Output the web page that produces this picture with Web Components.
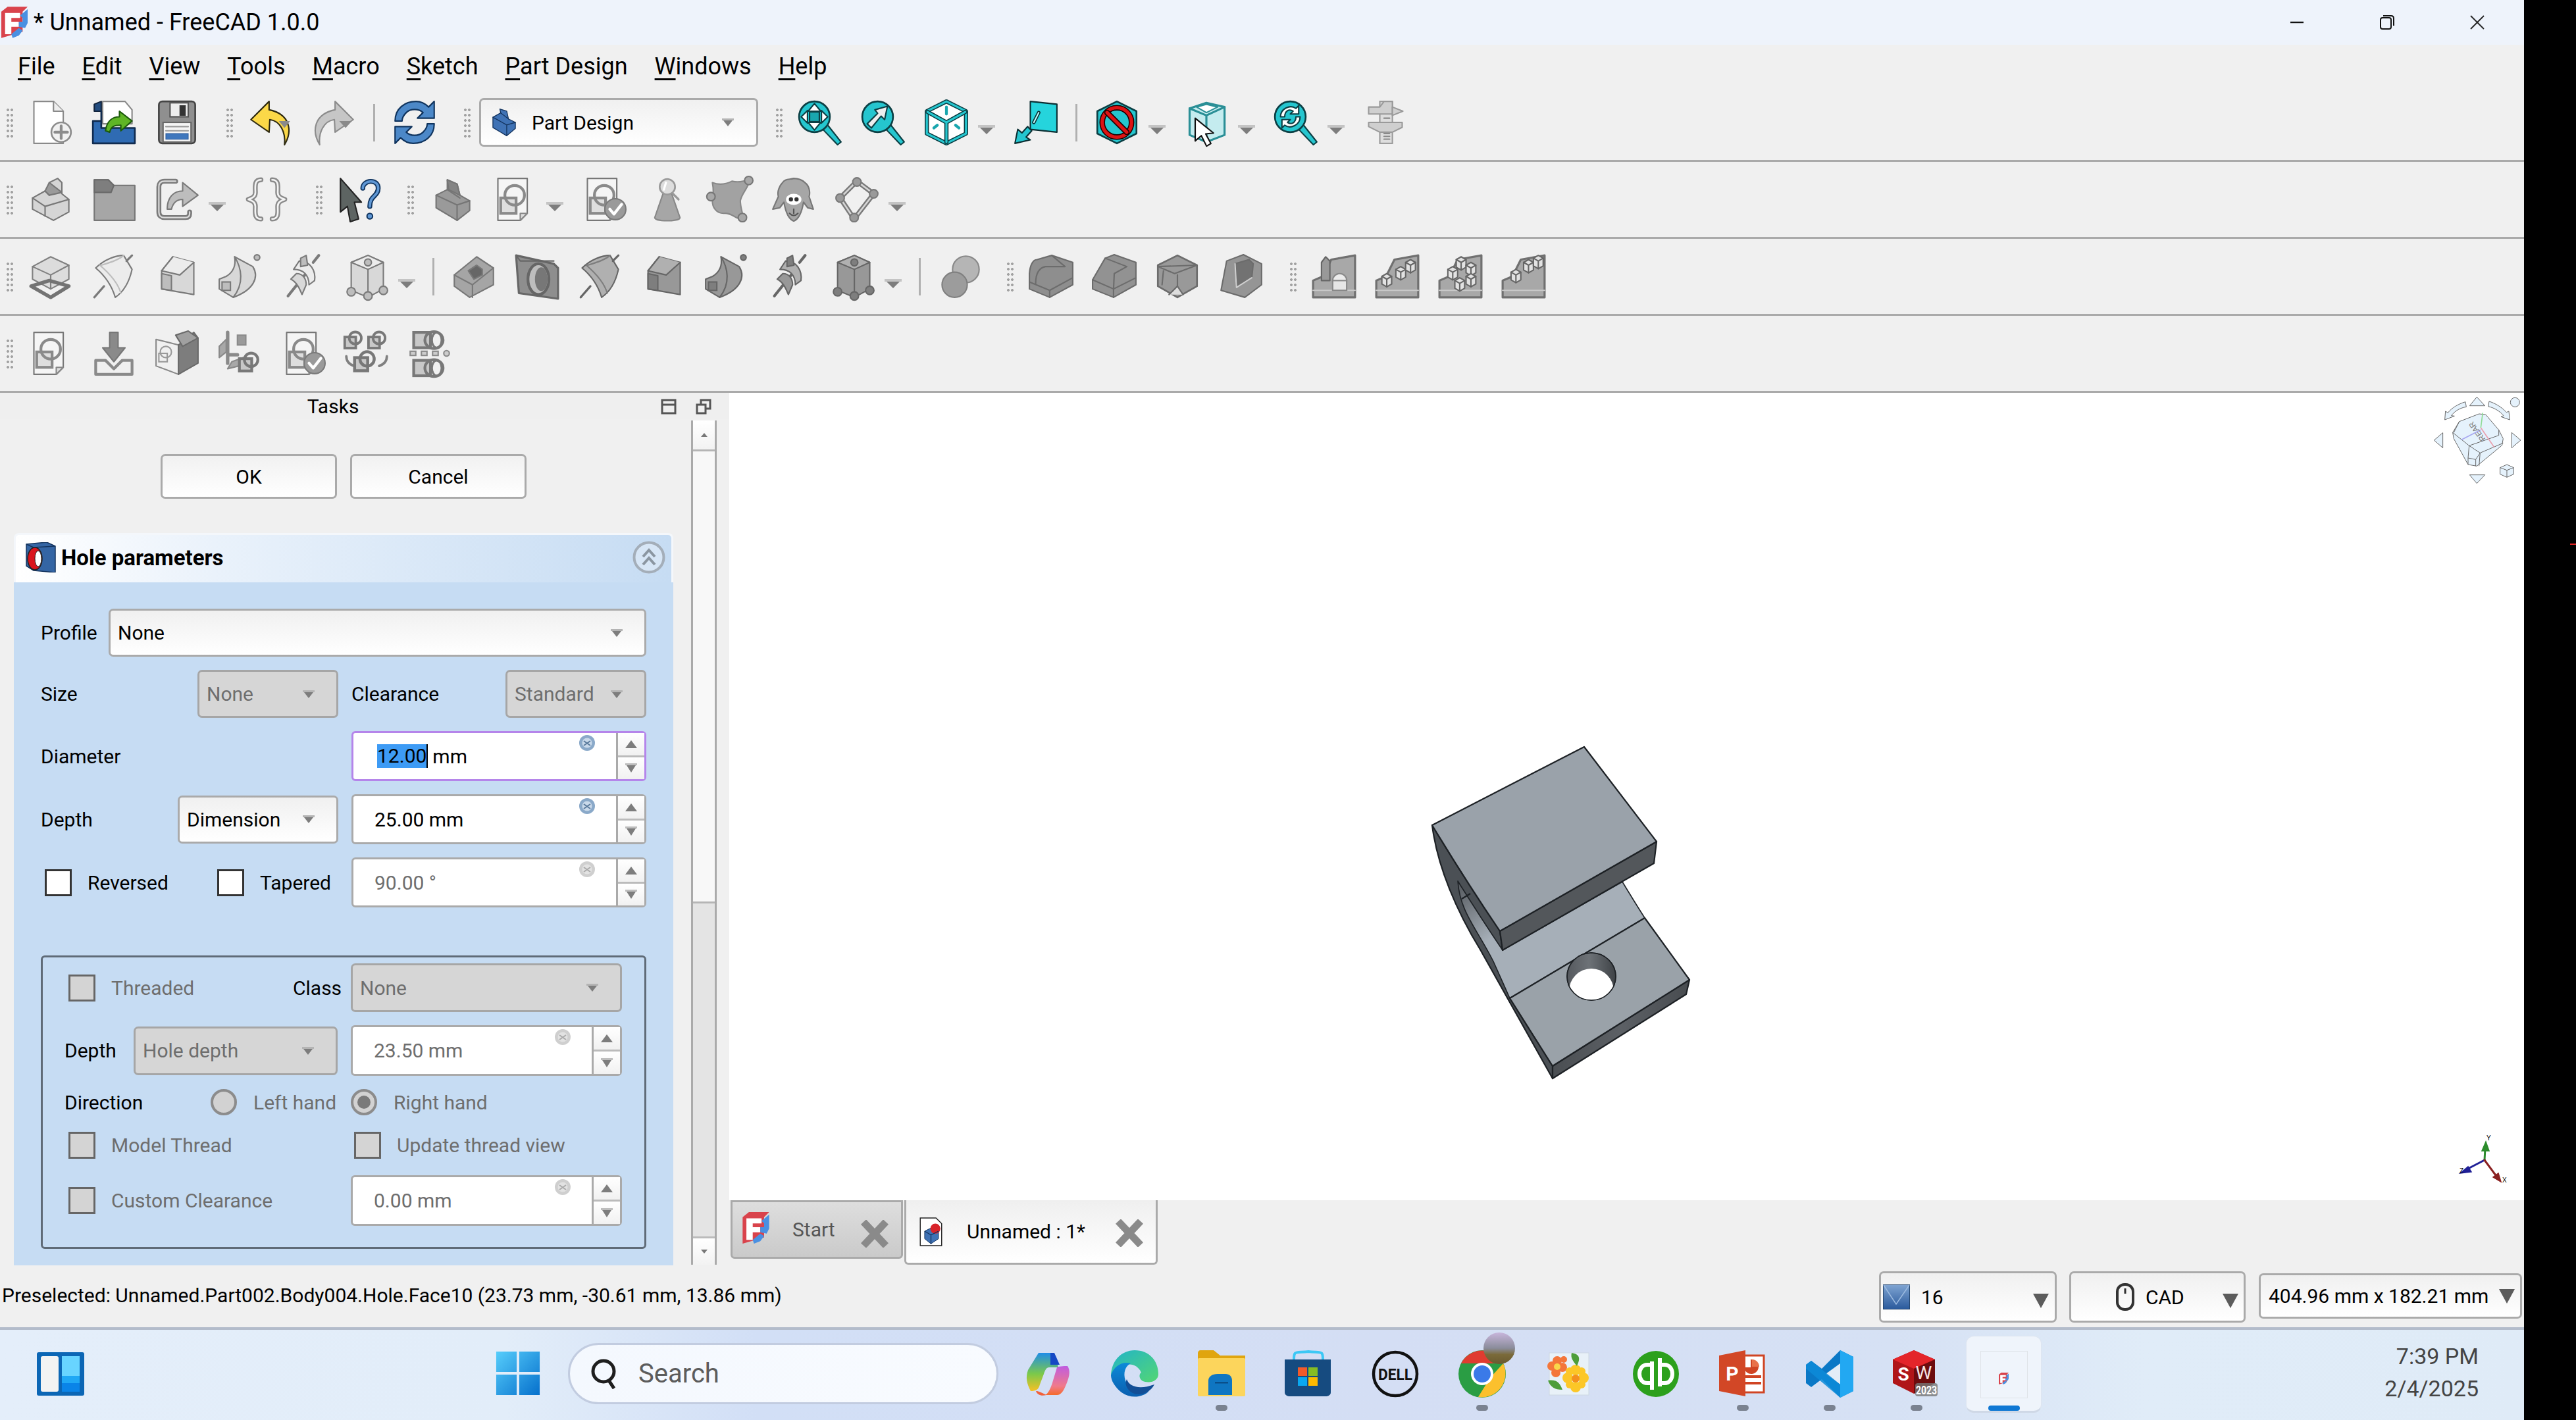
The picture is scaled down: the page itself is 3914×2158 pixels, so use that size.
<!DOCTYPE html>
<html lang="en">
<head>
<meta charset="utf-8">
<title>FreeCAD</title>
<style>
  html, body { margin: 0; padding: 0; background: #000; }
  body { width: 3914px; height: 2158px; overflow: hidden; font-family: Roboto, "Liberation Sans", sans-serif; font-size: 30px; color: #000; }
  u { text-underline-offset: 6px; text-decoration-thickness: 3px; }
</style>
</head>
<body>
<fc-screen>
  <fc-titlebar text="* Unnamed - FreeCAD 1.0.0"></fc-titlebar>
  <fc-menubar>
    <span><u>F</u>ile</span><span><u>E</u>dit</span><span><u>V</u>iew</span><span><u>T</u>ools</span><span><u>M</u>acro</span><span><u>S</u>ketch</span><span><u>P</u>art Design</span><span><u>W</u>indows</span><span><u>H</u>elp</span>
  </fc-menubar>
  <fc-tbrow items="| new open save | undo redo : refresh | @ | fitall fitsel cube v plane : style v selbox v zoomsync v measure">
    <fc-combo style="width:424px;height:74px;padding-left:14px" arrow="34"><fc-icon name="pdlogo" size="42" box="42"></fc-icon><span style="margin-left:21px">Part Design</span></fc-combo>
  </fc-tbrow>
  <fc-tbrow items="| parts folder link v braces | whatsthis |14 body sketch v validate cone blob sheep diamond v"></fc-tbrow>
  <fc-tbrow items="| pad revolve loft pipe helix box v : pocket hole groove subloft subpipe subhelix subbox v : bool |13 fillet chamfer draft thick |17 mirror linear polar multi"></fc-tbrow>
  <fc-tbrow items="| sketch import attach planes validate chains1 chains2"></fc-tbrow>

  <fc-main>
    <fc-dock title-text="Tasks">
      <fc-actions><fc-button>OK</fc-button><fc-button>Cancel</fc-button></fc-actions>
      <fc-taskbox heading="Hole parameters">
        <fc-row cols="103px 817px"><span>Profile</span><fc-combo>None</fc-combo></fc-row>
        <fc-row cols="238px 214px 254px 214px"><span>Size</span><fc-combo disabled>None</fc-combo><span style="padding-left:20px">Clearance</span><fc-combo disabled>Standard</fc-combo></fc-row>
        <fc-row cols="472px 448px"><span>Diameter</span><fc-spin value="12.00" unit="mm" focused></fc-spin></fc-row>
        <fc-row cols="208px 244px 468px"><span>Depth</span><fc-combo>Dimension</fc-combo><fc-spin style="margin-left:20px" value="25.00" unit="mm"></fc-spin></fc-row>
        <fc-row cols="268px 204px 448px"><fc-check style="margin-left:6px">Reversed</fc-check><fc-check>Tapered</fc-check><fc-spin value="90.00" unit="°" disabled></fc-spin></fc-row>
        <fc-group>
          <fc-row cols="347px 88px 412px"><fc-check style="margin-left:6px" disabled>Threaded</fc-check><span>Class</span><fc-combo disabled style="height:74px">None</fc-combo></fc-row>
          <fc-row cols="105px 330px 412px"><span>Depth</span><fc-combo disabled style="height:74px;margin-right:20px">Hole depth</fc-combo><fc-spin style="height:77px" value="23.50" unit="mm" dim></fc-spin></fc-row>
          <fc-row cols="222px 213px 412px"><span>Direction</span><fc-radio>Left hand</fc-radio><fc-radio checked>Right hand</fc-radio></fc-row>
          <fc-row cols="440px 407px" style="margin-top:5px"><fc-check style="margin-left:6px" disabled>Model Thread</fc-check><fc-check disabled>Update thread view</fc-check></fc-row>
          <fc-row cols="435px 412px" style="margin-top:5px"><fc-check style="margin-left:6px" disabled>Custom Clearance</fc-check><fc-spin style="height:77px" value="0.00" unit="mm" dim></fc-spin></fc-row>
        </fc-group>
      </fc-taskbox>
    </fc-dock>
    <fc-viewport>
      <fc-view3d></fc-view3d>
      <fc-tabs>
        <fc-tab icon="logo">Start</fc-tab>
        <fc-tab icon="doc" active>Unnamed : 1*</fc-tab>
      </fc-tabs>
    </fc-viewport>
  </fc-main>

  <fc-statusbar text="Preselected: Unnamed.Part002.Body004.Hole.Face10 (23.73 mm, -30.61 mm, 13.86 mm)">
    <fc-combo big low style="width:270px;height:78px;padding-left:3px" arrow="9"><svg width="41" height="38" viewBox="0 0 41 38"><defs><linearGradient id="sw" x1="0" y1="0" x2="0" y2="1"><stop offset="0" stop-color="#7fa4d2"/><stop offset="1" stop-color="#2a5a9c"/></linearGradient></defs><rect x=".5" y=".5" width="40" height="37" fill="url(#sw)" stroke="#24466f"/><path d="M1 1L20 30 40 1" fill="none" stroke="#9dbbe0" stroke-width="1.5"/></svg><span style="margin-left:17px">16</span></fc-combo>
    <fc-combo big low style="width:268px;height:78px;margin-left:19px;padding-left:67px" arrow="8"><svg width="30" height="42" viewBox="0 0 30 42"><rect x="3" y="2" width="24" height="38" rx="11" fill="none" stroke="#333" stroke-width="4"/><path d="M15 8v8" stroke="#333" stroke-width="3"/></svg><span style="margin-left:16px">CAD</span></fc-combo>
    <fc-combo big style="width:400px;height:69px;margin-left:20px;margin-top:3px;padding-left:12px" arrow="8">404.96 mm x 182.21 mm</fc-combo>
  </fc-statusbar>

  <fc-taskbar>
    <fc-taskicon name="widgets" plain style="margin-left:56px"></fc-taskicon>
    <fc-taskicon name="start" plain style="margin-left:624px;width:70px"></fc-taskicon>
    <fc-search>Search</fc-search>
    <fc-taskicon name="copilot"></fc-taskicon>
    <fc-taskicon name="edge"></fc-taskicon>
    <fc-taskicon name="files" dot></fc-taskicon>
    <fc-taskicon name="store"></fc-taskicon>
    <fc-taskicon name="dell"></fc-taskicon>
    <fc-taskicon name="chrome" dot></fc-taskicon>
    <fc-taskicon name="paint"></fc-taskicon>
    <fc-taskicon name="qb"></fc-taskicon>
    <fc-taskicon name="ppt" dot></fc-taskicon>
    <fc-taskicon name="vscode" dot></fc-taskicon>
    <fc-taskicon name="sw" dot></fc-taskicon>
    <fc-taskicon name="freecad" active></fc-taskicon>
    <fc-clock time="7:39 PM" date="2/4/2025"></fc-clock>
  </fc-taskbar>
</fc-screen>

<script>
const open_ = (el, html) => { el.attachShadow({ mode: 'open' }).innerHTML = html; };

// svg helpers for the toolbar icons, 64 unit box
const p = (d, f = 'none', s = '#6b6b6b', w = 2) => `<path d="${d}" fill="${f}" stroke="${s}" stroke-width="${w}" stroke-linejoin="round" stroke-linecap="round"/>`;
const c = (x, y, r, f = 'none', s = '#6b6b6b', w = 2) => `<circle cx="${x}" cy="${y}" r="${r}" fill="${f}" stroke="${s}" stroke-width="${w}"/>`;
const r = (x, y, wd, h, f = 'none', s = '#6b6b6b', w = 2) => `<rect x="${x}" y="${y}" width="${wd}" height="${h}" fill="${f}" stroke="${s}" stroke-width="${w}"/>`;

const LT = ['#ececec', '#d8d8d8', '#bdbdbd', '#7a7a7a'];
const DK = ['#b0b0b0', '#989898', '#7e7e7e', '#666'];
const TEAL = '#25c6cf', INK = '#0c3f44';

const lens = inner => p('M36 42l7-6 19 24-5 4z', TEAL, INK, 2) + c(24, 24, 22, TEAL, INK, 2.5) + inner;
const page = () => p('M8 2H50V52L40 62H8Z', '#f5f5f5', '#777') + p('M50 52H40V62Z', '#ddd', '#888') + r(12, 30, 22, 22, '#dedede', '#8a8a8a', 4) + c(32, 26, 14, 'none', '#8a8a8a', 4);
const tick = () => c(48, 46, 15, '#9a9a9a', '#7a7a7a', 2) + p('M40 46l6 7 11-14', 'none', '#fff', 4);
const link = (x, y, s) => `<g transform="translate(${x} ${y}) scale(${s})">` + r(1, 12, 22, 22, '#c8c8c8', '#787878', 5) + c(22, 14, 12, 'none', '#787878', 5) + `</g>`;
const wide = (x, y) => `<g transform="translate(${x} ${y})">` + r(1, 2, 24, 22, '#c8c8c8', '#787878', 4) + `<ellipse cx="30" cy="13" rx="13" ry="12" fill="none" stroke="#787878" stroke-width="4"/><ellipse cx="34" cy="13" rx="7" ry="11" fill="none" stroke="#787878" stroke-width="3"/></g>`;
const sel = 'M0 0l0 26 7-6 6 12 5-3-6-11 9-1z';

const revolveI = t => p('M6 20C18 8 34 2 46 2L58 22C54 40 46 54 34 62 28 42 18 30 6 20Z', t[0], t[3]) + p('M50 10l8-8M4 62l14-16', 'none', t[3], 3) + p('M12 16C26 28 38 42 42 56M46 2C40 8 28 12 14 16', 'none', t[2]);
const loftI = t => p('M26 4L56 12V58L10 50V24Z', t[1], t[3]) + p('M26 4L10 24 36 30 56 12', t[0], t[3]) + p('M10 28L24 31V52L10 50Z', t[2], t[3]);
const pipeI = t => p('M24 4L50 18C60 34 50 52 22 62L2 50V36L12 32C22 26 26 16 24 4Z', t[1], t[3]) + c(56, 5, 4, t[2], t[3]) + r(6, 40, 12, 12, t[2], t[3]) + p('M24 4C34 20 38 42 22 62', 'none', t[3]);
const helixI = t => p('M10 60L34 30M46 12l8-10', 'none', t[3], 4) + p('M26 10C42 10 50 24 48 38L40 44C40 30 32 22 18 22Z', t[0], t[3]) + p('M22 28C32 28 36 36 36 44L30 58C26 48 22 40 14 36Z', t[1], t[3]) + p('M28 6l8-4 2 14-10 2z', t[2], t[3]);
const boxI = t => p('M10 12L34 2 56 12V50L34 62 10 52Z', t[1], t[3]) + p('M10 12L34 22 56 12 34 2Z', t[0], t[3]) + p('M34 22V62', 'none', t[3]) + c(10, 54, 6, t[2], t[3]) + c(34, 60, 6, t[2], t[3]) + c(56, 52, 6, t[2], t[3]) + c(34, 12, 5, t[2], t[3]);
const plate = inner => p('M2 38L16 32 28 8 62 2V62H2Z', '#a8a8a8', '#707070', 3) + p('M2 52L62 52', 'none', '#c8c8c8', 2) + inner;
const minicube = (x, y) => p(`M${x} ${y + 4}l7-4 7 4v11l-7 4-7-4z`, '#e2e2e2', '#666') + p(`M${x} ${y + 4}l7 4 7-4M${x + 7} ${y + 8}v11`, 'none', '#666');

const ICONS = {
  new: p('M8 2H36L50 16V62H8Z', '#fff', '#8a8a8a') + p('M36 2V16H50', '#eee', '#8a8a8a') + c(47, 46, 14, '#f1f1f1', '#8c8c8c', 2.5) + p('M47 37V55M38 46H56', 'none', '#8c8c8c', 4),
  open: p('M4 6L14 2V16H4Z', '#234d80', '#12243c') + p('M16 2H48L58 14V34H16Z', '#fff', '#888') + p('M2 30L14 30 14 16 14 40H62V62H2Z', '#2f6bb3', '#102b4f', 2.5) + p('M20 44C22 30 30 24 40 24V16L58 30 42 44V36C32 36 28 38 26 46Z', '#5fb526', '#1d5a0d', 2),
  save: `<rect x="6" y="2" width="52" height="60" rx="5" fill="#8f8f8f" stroke="#454545" stroke-width="2.5"/>` + r(22, 4, 26, 20, '#eee', '#555') + r(36, 8, 8, 14, '#333', '#333', 1) + r(12, 32, 40, 28, '#f4f4f4', '#666') + p('M16 38H48M16 44H48', 'none', '#9a9a9a', 2) + r(16, 48, 32, 8, '#3f77bd', '#2a5a9c', 1),
  undo: p('M30 2L4 28 30 46 31 28C46 30 54 46 52 64 64 44 60 20 30 14Z', '#fbd848', '#2e2a10', 2) + p('M44 30H60L52 40Z', '#8a8a8a', 'none', 0),
  redo: p('M34 2L60 28 34 46 33 28C18 30 10 46 12 64 0 44 4 20 34 14Z', '#c6c6c6', '#8c8c8c', 2) + p('M40 30H58L49 40Z', '#8a8a8a', 'none', 0),
  refresh: p('M4 30C4 12 18 2 34 2 42 2 48 6 52 10L60 2V26H36L44 18C38 12 26 12 20 18 16 22 14 26 14 30Z', '#4c88c8', '#10345e', 2) + p('M60 34C60 52 46 62 30 62 22 62 16 58 12 54L4 62V38H28L20 46C26 52 38 52 44 46 48 42 50 38 50 34Z', '#4c88c8', '#10345e', 2),
  pdlogo: p('M6 20L24 10 22 1 38 6 42 24 58 32V46L38 63 6 44Z', '#3f72b5', '#14345f') + p('M6 20L38 38V63M38 38L58 32M24 10L42 24', 'none', '#14345f'),
  fitall: lens(p('M24 5L33 16H15ZM24 43L15 32H33ZM5 24L14 15V33ZM43 24L34 33V15Z', '#fff', INK) + r(17, 17, 14, 14, '#19a6ae', INK)),
  fitsel: lens(p('M38 9L34 28 29 23 15 40 9 34 24 19 20 14Z', '#eee', INK)),
  cube: p('M32 2L60 16V48L32 62 4 48V16Z', '#fff', INK, 6) + p('M32 2L60 16V48L32 62 4 48V16Z', 'none', TEAL, 3) + p('M5 17L32 32 59 17M32 32V60', 'none', INK, 6) + p('M5 17L32 32 59 17M32 32V60', 'none', TEAL, 3) + p('M32 10V20M14 40l5-4M50 40l-5-4', 'none', '#19a6ae', 4),
  plane: p('M24 2L62 6V46L24 42Z', '#25d4dc', '#0b2f33') + p('M36 18L29 32', 'none', '#0b2f33', 5) + p('M36 18L29 32', 'none', '#bff', 2) + p('M2 62L6 42 12 47 20 38 26 44 18 53 24 57Z', TEAL, '#0b2f33'),
  style: p('M32 2L60 16V48L32 62 4 48V16Z', TEAL, INK, 2.5) + c(32, 32, 21, 'none', '#1e0000', 8) + c(32, 32, 21, 'none', '#dc1414', 5) + p('M18 18L46 46', 'none', '#1e0000', 8) + p('M18 18L46 46', 'none', '#dc1414', 5),
  selbox: p('M8 12L32 4 58 10V50L32 60 8 50Z', '#c4ecef', '#2a8f96', 3) + p('M8 12L32 22 58 10M32 22V60', 'none', '#2a8f96', 3) + p('M18 10L32 6 48 10 32 18Z', '#fff', '#2a8f96', 2) + `<g transform="translate(16 26) scale(1.25)">${p(sel, '#fff', '#111', 1.6)}</g>`,
  zoomsync: lens(p('M10 24C10 12 24 6 32 12L36 8V20H24L28 16C22 12 16 16 16 24Z', '#fff', INK) + p('M38 24C38 36 24 42 16 36L12 40V28H24L20 32C26 36 32 32 32 24Z', '#fff', INK)),
  measure: r(24, 2, 18, 60, '#dedede', '#9a9a9a') + p('M8 10H24L30 2H42V20H8Z', '#cfcfcf', '#9a9a9a') + p('M42 10L57 16 42 22Z', '#cfcfcf', '#9a9a9a') + p('M8 32H56V39L42 46H24L8 38Z', '#cfcfcf', '#9a9a9a') + p('M30 48h8M30 52h8M30 56h8M30 26h8', 'none', '#8a8a8a', 2),

  parts: p('M6 30L24 20 30 26 30 8 42 2 48 8V24L58 32V50L36 62 6 46Z', '#d5d5d5', '#777') + p('M6 30L24 42 58 32M24 42V56', 'none', '#777') + p('M24 20L30 8 48 22 30 26Z', '#9a9a9a', '#777'),
  folder: p('M4 4H24L32 12H62V62H4Z', '#a6a6a6', '#767676') + p('M4 4H24L32 12 28 22H4Z', '#7e7e7e', '#6a6a6a'),
  link: p('M30 6H14C8 6 6 10 6 14V50C6 56 10 58 14 58H44C48 58 50 56 50 52V50', 'none', '#7a7a7a', 7) + p('M30 6H14C8 6 6 10 6 14V50C6 56 10 58 14 58H44C48 58 50 56 50 52V50', 'none', '#dcdcdc', 2) + p('M18 46C18 28 28 20 40 20V8L62 26 40 42V32C30 32 26 38 24 46Z', '#bdbdbd', '#7a7a7a'),
  braces: p('M24 4C14 4 16 14 16 22 16 28 12 30 6 32 12 34 16 36 16 42 16 50 14 60 24 60', 'none', '#8a8a8a', 7) + p('M24 4C14 4 16 14 16 22 16 28 12 30 6 32 12 34 16 36 16 42 16 50 14 60 24 60', 'none', '#f4f4f4', 2.5) + p('M40 4C50 4 48 14 48 22 48 28 52 30 58 32 52 34 48 36 48 42 48 50 50 60 40 60', 'none', '#8a8a8a', 7) + p('M40 4C50 4 48 14 48 22 48 28 52 30 58 32 52 34 48 36 48 42 48 50 50 60 40 60', 'none', '#f4f4f4', 2.5),
  whatsthis: p('M4 2L34 36 24 36 30 60 18 64 14 42 4 50Z', '#5d6462', '#222') + p('M36 16C36 4 58 2 58 16 58 28 46 26 46 42', 'none', '#103560', 7) + p('M36 16C36 4 58 2 58 16 58 28 46 26 46 42', 'none', '#5f97d4', 3.5) + c(46, 56, 4, '#5f97d4', '#103560'),
  body: p('M10 26L26 18V4L40 10 44 26 58 34V48L40 62 10 44Z', '#9a9a9a', '#757575') + p('M10 26L40 40V62M40 40L58 34M26 18L44 30', 'none', '#757575') + p('M26 4L40 10 44 26 28 18Z', '#848484', '#757575'),
  sketch: page(),
  validate: page() + tick(),
  cone: p('M32 6L50 58C50 64 14 64 14 58Z', '#a6a6a6', '#888') + c(32, 14, 11, '#ddd', '#999', 2.5) + p('M30 8l-3 10', 'none', '#fff', 3) + p('M40 24l8 8', 'none', '#999', 3),
  blob: p('M6 8C16 12 26 10 34 6 44 8 52 6 58 3 60 14 48 22 46 34 46 44 50 52 50 60 40 62 34 50 22 52 12 52 6 44 6 34 8 24 8 18 6 8Z', '#a2a2a2', '#888') + c(4, 28, 6, '#a8a8a8', '#777') + c(58, 5, 6, '#a8a8a8', '#777') + c(49, 58, 6, '#a8a8a8', '#777'),
  sheep: p('M16 8C20 2 26 4 32 2 38 2 44 4 48 8 54 12 56 22 54 28L60 46 52 44 46 36C44 48 40 60 32 63 24 60 20 48 18 36L12 44 2 46 10 28C8 20 12 12 16 8Z', '#a6a6a6', '#777') + `<ellipse cx="32" cy="32" rx="11" ry="8" fill="#fff"/>` + c(28, 32, 3, '#333', 'none', 0) + c(36, 32, 3, '#333', 'none', 0) + p('M26 52C30 56 34 56 38 52M32 46v6', 'none', '#555'),
  diamond: p('M32 6L56 24 28 60 8 30Z', 'none', '#7a7a7a', 7) + p('M32 6L56 24 28 60 8 30Z', 'none', '#d6d6d6', 2.5) + c(32, 7, 6, '#9a9a9a', '#7a7a7a') + c(56, 24, 6, '#9a9a9a', '#7a7a7a') + c(28, 58, 6, '#9a9a9a', '#7a7a7a') + c(8, 30, 6, '#9a9a9a', '#7a7a7a'),

  pad: p('M6 18L32 4 58 16V36L32 50 6 36Z', '#dcdcdc', '#808080') + p('M6 18L32 30 58 16M32 30V50', 'none', '#808080') + p('M4 46L30 38 58 46 32 62Z', 'none', '#737373', 5),
  revolve: revolveI(LT), loft: loftI(LT), pipe: pipeI(LT), helix: helixI(LT), box: boxI(LT),
  pocket: p('M4 30L36 4 60 20V44L26 62 4 46Z', '#a5a5a5', '#787878') + p('M4 30L30 44 60 20M30 44V62', 'none', '#787878') + p('M24 24L36 16 44 22V30L32 36Z', '#666', '#787878'),
  hole: p('M2 2L56 14 62 20V64L6 56Z', '#8e8e8e', '#676767', 3) + p('M2 2L8 10H56', 'none', '#676767') + `<ellipse cx="34" cy="36" rx="15" ry="22" fill="#bdbdbd" stroke="#666" stroke-width="4"/>` + `<ellipse cx="38" cy="36" rx="9" ry="17" fill="#777"/>`,
  groove: revolveI(DK), subloft: loftI(DK), subpipe: pipeI(DK), subhelix: helixI(DK), subbox: boxI(DK),
  bool: c(40, 22, 19, '#b5b5b5', '#888') + c(24, 44, 18, '#9c9c9c', '#808080'),
  fillet: p('M1 28C2 16 6 8 12 8L33 2 63 12V44L30 62 1 50Z', '#8e8e8e', '#6c6c6c') + p('M33 2L52 18 24 18C14 20 10 30 10 42M1 40L30 52 63 34M30 52V62', 'none', '#6c6c6c'),
  chamfer: p('M19 6L32 1 63 12V44L31 62 1 50V37Z', '#929292', '#6c6c6c') + p('M19 6L50 18 32 28M1 37L31 50 63 34M31 50V62M32 28L31 50', 'none', '#6c6c6c'),
  draft: p('M32 2L60 16V46L32 62 4 46V16Z', '#999', '#6c6c6c', 2.5) + p('M4 18L60 16 28 28ZM32 30V56M12 24L10 44', 'none', '#6c6c6c') + p('M20 58L32 46 40 58', '#ddd', '#6c6c6c'),
  thick: p('M4 52L12 10 36 1 62 14V44L38 62Z', '#959595', '#6c6c6c') + p('M24 14L44 8 50 14 48 34 26 48Z', '#727272', '#6c6c6c') + p('M26 48L24 14M26 48L48 34', 'none', '#cfcfcf'),
  mirror: plate(p('M14 12L20 4 26 10V38H14Z', '#999', '#666') + c(40, 38, 10, '#ececec', '#888') + r(30, 38, 20, 14, '#e6e6e6', '#888')),
  linear: plate(minicube(10, 28) + minicube(30, 18) + minicube(44, 8)),
  polar: plate(minicube(26, 4) + minicube(40, 12) + minicube(14, 18) + minicube(40, 28) + minicube(24, 34)),
  multi: plate(minicube(14, 22) + minicube(32, 8) + minicube(46, 2)),

  import: p('M26 2H38V24H48L32 44 16 24H26Z', '#8a8a8a', '#777') + p('M6 42H20L32 54 44 42H58V62H6Z', '#f0f0f0', '#8a8a8a', 4),
  attach: p('M2 12L34 20V62L2 50Z', '#f0f0f0', '#8a8a8a') + r(6, 32, 12, 12, 'none', '#999') + c(16, 30, 8, 'none', '#999') + p('M34 20L56 2 62 10V46L34 62Z', '#7d7d7d', '#6a6a6a') + p('M30 6L48 0 62 10 40 22Z', '#a0a0a0', '#6a6a6a'),
  planes: p('M14 2V46M14 34H28', 'none', '#8a8a8a', 5) + p('M2 22L12 12V30L2 38ZM20 44L36 38 30 50 14 54Z', '#a8a8a8', '#8a8a8a') + r(28, 6, 12, 14, '#9a9a9a', '#8a8a8a') + link(30, 30, .8),
  chains1: link(0, 0, .72) + link(34, 0, .72) + p('M3 36C3 44 8 48 14 50M61 36C61 44 56 48 50 50', 'none', '#808080', 3.5) + link(14, 28, .85),
  chains2: wide(8, 0) + wide(8, 40) + r(4, 29, 8, 6, '#ccc', '#8a8a8a') + r(20, 29, 8, 6, '#ccc', '#8a8a8a') + r(36, 29, 8, 6, '#ccc', '#8a8a8a') + c(56, 32, 4, '#ccc', '#8a8a8a'),
};

const LOGO = `<svg viewBox="0 0 42 50" width="100%" height="100%"><path d="M0 8L10 0H42L34 8V40L0 50Z" fill="#d9434c"/><path d="M6 10H30V18H16V24H28V32H16V44H6Z" fill="#fff"/><path d="M30 14L42 4V26L38 34 28 32V24L34 24V18Z" fill="#4a90e2"/><path d="M16 44L28 34 34 38 28 46 18 50Z" fill="#4a90e2"/></svg>`;
const DOCICON = `<svg viewBox="0 0 36 46" width="100%" height="100%"><path d="M1 1H26L35 10V45H1Z" fill="#fff" stroke="#222" stroke-width="1.5"/><path d="M8 22L20 16 30 22V34L18 42 8 34Z" fill="#3f72b5" stroke="#14345f"/><circle cx="25" cy="18" r="8" fill="#d8232a"/><path d="M8 22L18 28 30 22M18 28V42" fill="none" stroke="#14345f" stroke-width="1.4"/></svg>`;

customElements.define('fc-screen', class extends HTMLElement {
  connectedCallback() {
    open_(this, `<style>
      :host { display: block; position: relative; width: 3914px; height: 2158px; background: #000; }
      .win { display: flex; flex-direction: column; width: 3835px; height: 2158px; background: #f0f0f0; }
      .tick { position: absolute; left: 3905px; top: 826px; width: 9px; height: 2px; background: #d22; }
    </style><div class="win"><slot></slot></div><div class="tick"></div>`);
  }
});

customElements.define('fc-titlebar', class extends HTMLElement {
  connectedCallback() {
    open_(this, `<style>
      :host { display: flex; align-items: center; height: 68px; flex: none; background: #eef3fb; font-size: 36px; }
      .logo { width: 40px; height: 48px; margin: 0 9px 0 2px; }
      .txt { flex: 1; }
      .b { width: 137px; display: flex; justify-content: center; }
      .sp { width: 3px; }
    </style><div class="logo">${LOGO}</div><div class="txt">${this.getAttribute('text')}</div>
    <div class="b"><svg width="22" height="4"><path d="M1 2H21" stroke="#111" stroke-width="2.4"/></svg></div>
    <div class="b"><svg width="22" height="22" viewBox="0 0 22 22" fill="none" stroke="#111" stroke-width="2"><rect x="1" y="4" width="16" height="17" rx="3"/><path d="M5 1H17C20 1 21 3 21 5V16"/></svg></div>
    <div class="b"><svg width="22" height="22" viewBox="0 0 22 22" stroke="#222" stroke-width="1.8"><path d="M1 1L21 21M21 1L1 21"/></svg></div><div class="sp"></div>`);
  }
});

customElements.define('fc-menubar', class extends HTMLElement {
  connectedCallback() {
    open_(this, `<style>
      :host { display: flex; align-items: center; gap: 41px; height: 57px; padding: 4px 0 0 27px; flex: none; font-size: 36px; }
    </style><slot></slot>`);
  }
});

customElements.define('fc-icon', class extends HTMLElement {
  connectedCallback() {
    const size = this.getAttribute('size') || 68, box = this.getAttribute('box') || 96;
    open_(this, `<style>
      :host { display: flex; align-items: center; justify-content: center; flex: none; width: ${box}px; height: ${size}px; }
      svg { overflow: visible; }
    </style><svg viewBox="0 0 64 64" width="${size}" height="${size}">${ICONS[this.getAttribute('name')] || ''}</svg>`);
  }
});

customElements.define('fc-tbrow', class extends HTMLElement {
  connectedCallback() {
    const toks = this.getAttribute('items').trim().split(/\s+/);
    const html = toks.map((t, i) => {
      if (t[0] === '|') {
        const m = i === 0 ? 0 : (t.slice(1) || 17);
        return `<div class="grip" style="margin-left:${m}px"><i></i></div>`;
      }
      if (t === ':') return '<div class="sep"><i></i></div>';
      if (t === 'v') return '<div class="drop"><svg width="26" height="14" viewBox="0 0 26 14"><path d="M0 0H26V4H0Z" fill="#c4c4c4"/><path d="M3 4H23L13 14Z" fill="#7d7d7d"/></svg></div>';
      if (t === '@') return '<div class="slot"><slot></slot></div>';
      return `<fc-icon name="${t}"></fc-icon>`;
    }).join('');
    open_(this, `<style>
      :host { display: flex; align-items: center; height: 114px; flex: none; border-bottom: 3px solid #aaa; }
      .grip { flex: none; width: 29px; display: flex; justify-content: flex-end; padding-right: 0; }
      .grip i { display: block; width: 12px; height: 46px; margin-right: 8px; background: radial-gradient(circle, #a2a2a2 1.7px, transparent 2.2px) 0 0 / 6px 8px; }
      .sep { flex: none; width: 27px; display: flex; justify-content: center; }
      .sep i { display: block; width: 3px; height: 57px; background: #b0b0b0; }
      .drop { flex: none; width: 40px; height: 20px; }
      .slot { margin-left: 4px; display: flex; }
    </style>${html}`);
  }
});

customElements.define('fc-combo', class extends HTMLElement {
  connectedCallback() {
    const dis = this.hasAttribute('disabled'), big = this.hasAttribute('big');
    const inset = this.getAttribute('arrow') || 33;
    open_(this, `<style>
      :host { display: flex; align-items: center; box-sizing: border-box; height: 73px; padding-left: 11px; white-space: nowrap;
        border: 3px solid ${dis ? '#a6a6a6' : '#aaa'}; border-radius: 7px;
        background: ${dis ? '#d6d6d6' : 'linear-gradient(#f0f0f0,#fff)'}; color: ${dis ? '#6e6e6e' : '#000'}; }
      .a { margin-left: auto; margin-right: ${inset}px; margin-top: ${this.hasAttribute('low') ? 12 : 0}px; flex: none; display: flex; }
    </style><slot></slot><div class="a">${big
      ? '<svg width="24" height="22"><path d="M0 0H24L12 22Z" fill="#5c5c5c"/></svg>'
      : '<svg width="18" height="12"><path d="M0 0H18V3H0Z" fill="#b4b4b4"/><path d="M2 3H16L9 12Z" fill="#7d7d7d"/></svg>'}</div>`);
  }
});

customElements.define('fc-spin', class extends HTMLElement {
  connectedCallback() {
    const focus = this.hasAttribute('focused'), dis = this.hasAttribute('disabled'), dim = this.hasAttribute('dim');
    const gray = dis || dim;
    const val = this.getAttribute('value'), unit = this.getAttribute('unit');
    const up = `<svg width="18" height="12"><path d="M9 0L18 12H0Z" fill="#7d7d7d"/></svg>`;
    const dn = `<svg width="18" height="14"><path d="M0 0H18V3H0Z" fill="#bdbdbd"/><path d="M2 3H16L9 14Z" fill="#7d7d7d"/></svg>`;
    open_(this, `<style>
      :host { display: flex; position: relative; box-sizing: border-box; height: 76px; background: #fff; white-space: nowrap;
        border: 3px solid ${focus ? '#b585ea' : '#aaa'}; border-radius: 6px; color: ${gray ? '#6e6e6e' : '#000'}; }
      .v { flex: 1; display: flex; align-items: center; padding-left: ${focus ? 36 : 32}px; }
      .s { background: #3d9bf5; line-height: 36px; height: 36px; }
      .car { display: inline-block; width: 2px; height: 36px; background: #000; margin-right: 7px; }
      .btns { flex: none; width: 40px; display: flex; flex-direction: column; border-left: 3px solid #aaa; }
      .btns div { flex: 1; display: flex; align-items: center; justify-content: center; background: linear-gradient(#fff,#f1f1f1); }
      .btns div + div { border-top: 3px solid #bbb; }
      .fx { position: absolute; right: 74px; top: 2px; width: 26px; height: 26px; }
    </style>
    <div class="v">${focus ? `<span class="s">${val}</span><span class="car"></span>${unit}` : `${val} ${unit}`}</div>
    <svg class="fx" viewBox="0 0 26 26"><circle cx="13" cy="13" r="12" fill="${gray ? '#cfcfcf' : '#8aa9c9'}"/><circle cx="13" cy="13" r="7.5" fill="${gray ? '#e2e2e2' : '#c9d9ea'}"/><path d="M8 10l10 7M18 10L8 17" stroke="${gray ? '#aaa' : '#5a7a9c'}" stroke-width="2"/></svg>
    <div class="btns"><div>${up}</div><div>${dn}</div></div>`);
  }
});

customElements.define('fc-check', class extends HTMLElement {
  connectedCallback() {
    const dis = this.hasAttribute('disabled');
    open_(this, `<style>
      :host { display: flex; align-items: center; gap: 24px; color: ${dis ? '#6e6e6e' : '#000'}; white-space: nowrap; }
      i { display: block; box-sizing: border-box; width: 41px; height: 41px; flex: none;
        border: 3px solid ${dis ? '#666' : '#333'}; background: ${dis ? '#d4d4d4' : '#fff'}; }
    </style><i></i><slot></slot>`);
  }
});

customElements.define('fc-radio', class extends HTMLElement {
  connectedCallback() {
    open_(this, `<style>
      :host { display: flex; align-items: center; gap: 25px; color: #6e6e6e; white-space: nowrap; }
      i { display: flex; align-items: center; justify-content: center; box-sizing: border-box; width: 40px; height: 40px; flex: none;
        border: 4px solid #8c8c8c; border-radius: 50%; background: #d2d2d2; }
      b { display: block; width: 20px; height: 20px; border-radius: 50%; background: #7a7a7a; }
    </style><i>${this.hasAttribute('checked') ? '<b></b>' : ''}</i><slot></slot>`);
  }
});

customElements.define('fc-button', class extends HTMLElement {
  connectedCallback() {
    open_(this, `<style>
      :host { display: flex; align-items: center; justify-content: center; box-sizing: border-box; width: 268px; height: 68px;
        border: 3px solid #aaa; border-radius: 7px; background: linear-gradient(#f1f1f1,#fff); }
    </style><slot></slot>`);
  }
});

customElements.define('fc-actions', class extends HTMLElement {
  connectedCallback() {
    open_(this, `<style>
      :host { display: flex; justify-content: center; gap: 20px; padding: 51px 0 52px; }
    </style><slot></slot>`);
  }
});

customElements.define('fc-dock', class extends HTMLElement {
  connectedCallback() {
    open_(this, `<style>
      :host { display: flex; flex-direction: column; flex: none; width: 1108px; height: 1331px; overflow: hidden; }
      .title { position: relative; display: flex; align-items: center; justify-content: center; height: 40px; flex: none; padding-right: 96px; background: #efefef; }
      .ic { position: absolute; top: 9px; }
      .body { display: flex; flex: 1; min-height: 0; padding: 2px 19px 6px 21px; }
      .scroll { flex: none; width: 1002px; height: 1286px; overflow: hidden; }
      .bar { flex: none; box-sizing: border-box; width: 39px; height: 1283px; margin-left: 27px; display: flex; flex-direction: column; border: solid #aaa; border-width: 0 3px; background: #e4e4e4; }
      .btn { flex: none; display: flex; justify-content: center; align-items: center; background: linear-gradient(#fff,#f2f2f2); }
      .th { flex: none; height: 690px; background: #f8f8f8; border-top: 3px solid #b5b5b5; border-bottom: 3px solid #b5b5b5; box-sizing: border-box; }
      .fill { flex: 1; }
    </style>
    <div class="title">${this.getAttribute('title-text')}
      <svg class="ic" style="left:1004px" width="24" height="24" viewBox="0 0 24 24" fill="none" stroke="#555" stroke-width="3"><rect x="2" y="2" width="20" height="20"/><path d="M2 9H22"/></svg>
      <svg class="ic" style="left:1057px" width="24" height="24" viewBox="0 0 24 24" fill="none" stroke="#555" stroke-width="3"><rect x="2" y="9" width="13" height="13"/><path d="M8 9V2H22V15H15"/></svg>
    </div>
    <div class="body">
      <div class="scroll"><slot></slot></div>
      <div class="bar">
        <div class="btn" style="height:44px"><svg width="10" height="6"><path d="M5 0L10 6H0Z" fill="#777"/></svg></div>
        <div class="th"></div><div class="fill"></div>
        <div class="btn" style="height:40px;border-top:3px solid #bbb"><svg width="10" height="6"><path d="M0 0H10L5 6Z" fill="#777"/></svg></div>
      </div>
    </div>`);
  }
});

customElements.define('fc-taskbox', class extends HTMLElement {
  connectedCallback() {
    open_(this, `<style>
      :host { display: block; width: 1002px; }
      .head { display: flex; align-items: center; box-sizing: border-box; height: 75px; padding: 0 9px 4px 15px; border: solid #f4f7fb; border-width: 3px 3px 0; border-radius: 8px 8px 0 0;
        background: linear-gradient(90deg,#fff 0,#eaf2fb 30%,#c6dcf3 100%); font-weight: 700; font-size: 33px; }
      .head span { flex: 1; margin-left: 8px; }
      .body { display: flex; flex-direction: column; gap: 20px; padding: 40px 41px 25px; background: #c6dcf3; }
    </style>
    <div class="head">
      <svg width="46" height="46" viewBox="0 0 46 46"><path d="M1 3L32 0 45 6V46L12 43 1 36Z" fill="#3465a4" stroke="#14345f" stroke-width="1.5"/><path d="M1 3L12 8 45 6M12 8V43" fill="none" stroke="#14345f" stroke-width="1.5"/><ellipse cx="14" cy="25" rx="11" ry="17" fill="#d9141c" stroke="#222" stroke-width="1.5"/><ellipse cx="19" cy="25" rx="5" ry="12" fill="#fff" stroke="#222"/></svg>
      <span>${this.getAttribute('heading')}</span>
      <svg width="50" height="50" viewBox="0 0 50 50" fill="none"><circle cx="25" cy="25" r="22.5" fill="#d7e6f6" stroke="#a4aeb9" stroke-width="4"/><path d="M16 24L25 14 34 24M16 36L25 26 34 36" stroke="#8b96a1" stroke-width="4"/></svg>
    </div>
    <div class="body"><slot></slot></div>`);
  }
});

customElements.define('fc-row', class extends HTMLElement {
  connectedCallback() {
    open_(this, `<style>
      :host { display: grid; grid-template-columns: ${this.getAttribute('cols')}; align-items: center; }
    </style><slot></slot>`);
  }
});

customElements.define('fc-group', class extends HTMLElement {
  connectedCallback() {
    open_(this, `<style>
      :host { display: flex; flex-direction: column; gap: 20px; box-sizing: border-box; height: 446px; margin-top: 53px; padding: 9px 33px 33px;
        border: 3px solid #5f6b77; border-radius: 6px; }
    </style><slot></slot>`);
  }
});

customElements.define('fc-main', class extends HTMLElement {
  connectedCallback() {
    open_(this, `<style>:host { display: flex; flex: none; height: 1331px; }</style><slot></slot>`);
  }
});

customElements.define('fc-viewport', class extends HTMLElement {
  connectedCallback() {
    open_(this, `<style>:host { display: flex; flex-direction: column; flex: 1; min-width: 0; }</style><slot></slot>`);
  }
});

customElements.define('fc-view3d', class extends HTMLElement {
  connectedCallback() {
    open_(this, `<style>
      :host { display: block; flex: none; height: 1227px; background: #fff; }
      svg { display: block; }
      text { font-family: "Liberation Sans", sans-serif; }
    </style>
    <svg width="2727" height="1227" viewBox="1108 597 2727 1227">
      <defs>
        <linearGradient id="wall" x1="2215" y1="1339" x2="2300" y2="1440" gradientUnits="userSpaceOnUse"><stop offset="0" stop-color="#54585d"/><stop offset=".75" stop-color="#a6afb8"/></linearGradient>
        <linearGradient id="bore" x1="0" y1="0" x2="1" y2="0"><stop offset="0" stop-color="#55595e"/><stop offset=".45" stop-color="#6d7277"/><stop offset="1" stop-color="#3e4246"/></linearGradient>
        <linearGradient id="band" x1="0" y1="0" x2="1" y2="0"><stop offset="0" stop-color="#4a4e52"/><stop offset=".5" stop-color="#5c6065"/><stop offset="1" stop-color="#484c50"/></linearGradient>
        <clipPath id="hc"><ellipse cx="2418" cy="1484" rx="37" ry="36"/></clipPath>
      </defs>
      <g stroke="#1d2125" stroke-width="2.2" stroke-linejoin="round">
        <path d="M2176 1254C2184 1318 2214 1386 2249 1443L2359 1639V1620L2294 1517 2283 1444 2279 1415Q2228 1340 2176 1254Z" fill="#4b5055"/>
        <path d="M2359 1620L2567 1489 2562 1511 2359 1639Z" fill="url(#band)"/>
        <path d="M2215 1339C2218 1385 2243 1410 2269 1461L2294 1517 2499 1395Q2480 1365 2465 1340L2283 1444Q2250 1395 2215 1339Z" fill="url(#wall)" stroke-width="1.6"/>
        <path d="M2221 1366L2234 1358" fill="none"/>
        <path d="M2294 1517L2499 1395 2567 1489 2359 1620Z" fill="#9aa2a9"/>
        <path d="M2279 1415L2517 1279 2513 1312 2283 1444Z" fill="#53575b"/>
        <path d="M2176 1254L2407 1135 2517 1279 2279 1415Q2228 1340 2176 1254Z" fill="#9aa2aa"/>
        <ellipse cx="2418" cy="1484" rx="37" ry="36" fill="url(#bore)" stroke-width="1.5"/>
      </g>
      <ellipse cx="2418" cy="1506" rx="34" ry="34" fill="#fff" clip-path="url(#hc)"/>
      <ellipse cx="2418" cy="1484" rx="37" ry="36" fill="none" stroke="#1d2125" stroke-width="1.6"/>

      <g transform="translate(3600 570) scale(.3333)" fill="#e5f2fc" stroke="#666" stroke-width="3" stroke-linejoin="round">
        <path d="M457 140L490 100 527 140ZM295 297L335 263V332ZM649 262L690 297 649 332ZM457 455H527L490 494Z"/>
        <path d="M438 122L442 145C412 150 388 165 374 185L388 187 344 204 347 165 358 172C375 150 405 132 438 122Z"/>
        <path d="M546 120L542 143C572 150 596 166 612 185L600 190 640 204 636 165 625 170C605 148 578 130 546 120Z"/>
        <circle cx="664" cy="124" r="21"/>
        <path d="M596 422L627 408 658 422V452L627 466 596 452Z"/><path d="M596 422L627 434 658 422M627 434V466" fill="none"/>
        <path d="M410 212L500 177 530 180 590 250 610 290 605 320 490 415 450 408 385 290 380 262Z"/>
        <path d="M380 262L455 322 590 275 590 250M410 212L385 262M455 322L505 355 500 415M505 355L610 310M455 322L450 378 485 385 505 355M450 378L450 408M485 385V415" fill="none"/>
        <path d="M517 172L508 240" stroke="#8fdc96" stroke-width="5" fill="none"/>
        <path d="M420 295L508 250" stroke="#a6a6f0" stroke-width="5" fill="none"/>
        <path d="M508 240L570 330" stroke="#e8a0ae" stroke-width="5" fill="none"/>
        <text x="0" y="0" transform="translate(530 290) rotate(-126)" font-size="36" fill="#777" stroke="none">REAR</text>
      </g>

      <g fill="none" stroke-width="3" stroke-linecap="round">
        <path d="M3775 1763L3776 1745" stroke="#2c8c2c"/><path d="M3777 1735L3771 1749H3782Z" fill="#2c8c2c" stroke="#2c8c2c" stroke-width="1.5"/>
        <path d="M3775 1763L3750 1776" stroke="#1f1f96"/><path d="M3738 1783L3750 1773 3755 1781Z" fill="#1f1f96" stroke="#1f1f96" stroke-width="1.5"/>
        <path d="M3775 1763L3792 1786" stroke="#8a2020"/><path d="M3800 1796L3788 1789 3796 1783Z" fill="#8a2020" stroke="#8a2020" stroke-width="1.5"/>
        <text x="3778" y="1733" font-size="10" fill="#000" stroke="none">Y</text>
        <text x="3737" y="1783" font-size="10" fill="#000" stroke="none">Z</text>
        <text x="3802" y="1797" font-size="10" fill="#000" stroke="none">X</text>
      </g>
    </svg>`);
  }
});

customElements.define('fc-tabs', class extends HTMLElement {
  connectedCallback() {
    open_(this, `<style>:host { display: flex; align-items: flex-start; flex: 1; padding-left: 2px; gap: 2px; }</style><slot></slot>`);
  }
});

customElements.define('fc-tab', class extends HTMLElement {
  connectedCallback() {
    const on = this.hasAttribute('active');
    const logo = this.getAttribute('icon') === 'logo';
    open_(this, `<style>
      :host { display: flex; align-items: center; box-sizing: border-box; color: ${on ? '#000' : '#555'};
        width: ${on ? 385 : 262}px; height: ${on ? 98 : 89}px; padding: ${on ? '0 0 0 20px' : '0 0 0 15px'};
        border: 3px solid #aaa; ${on ? 'border-top: 0;' : ''} border-radius: 0 0 6px 6px;
        background: ${on ? 'linear-gradient(#efefef,#fff)' : 'linear-gradient(#dedede,#cacaca)'}; }
      .i { flex: none; width: ${logo ? 41 : 35}px; height: ${logo ? 48 : 44}px; margin-top: ${logo ? -6 : 0}px; }
      .t { margin-left: ${logo ? 35 : 37}px; flex: 1; white-space: nowrap; }
      .x { flex: none; margin-right: 19px; margin-top: ${logo ? 12 : 4}px; }
    </style><div class="i">${logo ? LOGO : DOCICON}</div><div class="t"><slot></slot></div>
    <svg class="x" width="42" height="42" viewBox="0 0 42 42"><path d="M4 3L38 39M38 3L4 39" stroke="#8a8a8a" stroke-width="11"/></svg>`);
  }
});

customElements.define('fc-statusbar', class extends HTMLElement {
  connectedCallback() {
    open_(this, `<style>
      :host { display: flex; align-items: flex-start; box-sizing: border-box; height: 89px; flex: none; padding: 4px 3px 0 3px; }
      .t { flex: 1; line-height: 74px; white-space: nowrap; }
    </style><div class="t">${this.getAttribute('text')}</div><slot></slot>`);
  }
});

customElements.define('fc-search', class extends HTMLElement {
  connectedCallback() {
    open_(this, `<style>
      :host { display: flex; align-items: center; box-sizing: border-box; width: 654px; height: 93px; margin: 20px 9px 0 41px; padding-left: 30px;
        border: 3px solid #c2cce0; border-radius: 47px; background: linear-gradient(90deg,#f4f8fe,#f8fbff); color: #5c5c5c; font-size: 40px; flex: none; }
      svg { margin-right: 28px; }
    </style><svg width="46" height="46" viewBox="0 0 46 46" fill="none" stroke="#1e1e1e" stroke-width="5"><circle cx="21" cy="19" r="16"/><path d="M29 33L37 45"/></svg><slot></slot>`);
  }
});

const TASK = {
  widgets: `<rect x="0" y="3" width="72" height="66" rx="3" fill="#0b66b5"/><rect x="6" y="9" width="27" height="54" rx="3" fill="#f3f3f3"/><rect x="38" y="9" width="27" height="30" fill="#68d4ff"/><rect x="38" y="39" width="27" height="11" fill="#20a8f5"/><rect x="38" y="50" width="27" height="13" fill="#0a84e8"/>`,
  start: `<defs><linearGradient id="g" x1="0" y1="0" x2="1" y2="1"><stop offset="0" stop-color="#56cdfb"/><stop offset="1" stop-color="#0670cc"/></linearGradient></defs><path d="M2 2H34V34H2ZM38 2H70V34H38ZM2 38H34V70H2ZM38 38H70V70H38Z" fill="url(#g)"/>`,
  copilot: `<defs><linearGradient id="a" x1="0" y1="0" x2="0" y2="1"><stop offset="0" stop-color="#1f8de8"/><stop offset=".55" stop-color="#7bc94a"/><stop offset="1" stop-color="#f6c024"/></linearGradient><linearGradient id="b" x1="0" y1="0" x2="0" y2="1"><stop offset="0" stop-color="#c05ce0"/><stop offset=".7" stop-color="#f07a8a"/><stop offset="1" stop-color="#f56a2a"/></linearGradient></defs><path d="M22 4H40C44 4 46 6 48 12L52 26H38C34 26 32 30 30 36L24 52C22 60 18 62 10 62 4 50 2 42 6 30Z" fill="url(#a)"/><path d="M32 68H50C56 68 60 62 64 52 70 38 70 30 66 24 64 24 54 24 50 26L44 46C40 60 36 66 32 68Z" fill="url(#b)"/><path d="M40 4H46L54 22 40 22Z" fill="#1548c4"/><path d="M20 62C26 64 30 66 34 68 26 70 20 68 18 62Z" fill="#f2603a"/>`,
  edge: `<defs><linearGradient id="a" x1="0" y1="0" x2="1" y2="1"><stop offset="0" stop-color="#22b4c8"/><stop offset="1" stop-color="#53d674"/></linearGradient><linearGradient id="b" x1="0" y1="0" x2="0" y2="1"><stop offset="0" stop-color="#0d8ad8"/><stop offset="1" stop-color="#0a5fb0"/></linearGradient></defs><path d="M36 0C58 0 72 16 72 36 72 46 62 50 52 48 42 46 42 36 46 34 42 24 32 20 24 22 12 24 4 32 0 40 0 16 16 0 36 0Z" fill="url(#a)"/><path d="M0 38C4 24 18 16 30 20 22 24 18 34 22 46 26 60 42 70 58 62 48 72 30 74 16 64 6 56 0 46 0 38Z" fill="url(#b)"/><path d="M24 44C28 56 44 60 66 52 58 68 34 74 24 56 22 52 22 48 24 44Z" fill="#124e96"/>`,
  files: `<path d="M0 4C0 2 2 0 4 0H24L34 8H72V20H0Z" fill="#e0a50e"/><rect x="0" y="12" width="72" height="58" rx="2" fill="#fcd55c"/><path d="M30 36H42C48 36 52 40 52 46V68H16V46C16 40 22 36 30 36Z" fill="#0f76c2"/><rect x="26" y="48" width="20" height="2.5" fill="#0a4f8a"/>`,
  store: `<path d="M14 14C14 0 16 4 36 2 56 4 58 0 58 14" fill="none" stroke="#3cc8f5" stroke-width="4"/><path d="M0 14H70V64C70 68 66 70 62 70H8C4 70 0 68 0 64Z" fill="#164b80"/><rect x="20" y="26" width="14" height="13" fill="#f25a2a"/><rect x="36" y="26" width="14" height="13" fill="#86bc24"/><rect x="20" y="41" width="14" height="13" fill="#0aa8f0"/><rect x="36" y="41" width="14" height="13" fill="#fdb900"/>`,
  dell: `<circle cx="36" cy="36" r="33" fill="none" stroke="#111" stroke-width="4.5"/><text x="36" y="45" font-family="Roboto, sans-serif" font-weight="700" font-size="24" text-anchor="middle" textLength="52" lengthAdjust="spacingAndGlyphs" fill="#111">DELL</text>`,
  chrome: `<defs><linearGradient id="ph" x1="0" y1="0" x2="0" y2="1"><stop offset="0" stop-color="#c8b6dc"/><stop offset=".5" stop-color="#8a8c9a"/><stop offset=".7" stop-color="#7a6a3a"/><stop offset="1" stop-color="#6a5a30"/></linearGradient></defs><circle cx="36" cy="36" r="36" fill="#2a9d44"/><path d="M4 20A36 36 0 0 1 68 20H36Z" fill="#e03c30"/><path d="M68 20A36 36 0 0 1 30 71L48 42Z" fill="#fbc02d"/><circle cx="36" cy="36" r="17" fill="#fff"/><circle cx="36" cy="36" r="13" fill="#3a7ae8"/><ellipse cx="62" cy="-3" rx="24" ry="24" fill="url(#ph)"/>`,
  paint: `<rect x="6" y="4" width="60" height="64" fill="#e8f1f8" stroke="#cdd8e2"/><g fill="#f4763a"><circle cx="18" cy="16" r="7"/><circle cx="10" cy="24" r="7"/><circle cx="26" cy="26" r="7"/><circle cx="16" cy="34" r="7"/><circle cx="28" cy="14" r="5"/></g><circle cx="18" cy="25" r="5" fill="#f9d64a"/><g fill="#fcc727"><circle cx="46" cy="30" r="8"/><circle cx="58" cy="42" r="8"/><circle cx="34" cy="42" r="8"/><circle cx="46" cy="56" r="8"/><circle cx="55" cy="32" r="6"/><circle cx="37" cy="32" r="6"/><circle cx="55" cy="52" r="6"/><circle cx="37" cy="52" r="6"/></g><circle cx="46" cy="43" r="6" fill="#f4901e"/><path d="M40 4C52 6 54 12 48 24 42 16 38 12 40 4ZM4 46C18 44 22 50 26 60 14 60 8 56 4 46Z" fill="#4d9e3a"/>`,
  qb: `<circle cx="36" cy="36" r="35" fill="#2ca01c"/><path d="M30 17V60M30 22H23C15 22 11 29 11 36S15 50 23 50H27" fill="none" stroke="#fff" stroke-width="6"/><path d="M42 12V55M42 50H49C57 50 61 43 61 36S57 22 49 22H45" fill="none" stroke="#fff" stroke-width="6"/>`,
  ppt: `<rect x="26" y="8" width="42" height="56" fill="#fff" stroke="#d04423" stroke-width="3"/><path d="M48 14A11 11 0 1 1 38 26H48Z" fill="#d04423"/><path d="M50 14A11 11 0 0 1 61 25H50Z" fill="#e8714a"/><rect x="36" y="38" width="28" height="4" fill="#d04423"/><rect x="36" y="48" width="28" height="4" fill="#d04423"/><path d="M0 8L40 0V70L0 62Z" fill="#d24726"/><text x="20" y="46" font-family="Roboto, sans-serif" font-weight="700" font-size="30" text-anchor="middle" fill="#fff">P</text>`,
  vscode: `<path d="M52 0L72 10V62L52 72 24 44 8 56 0 50V22L8 16 24 28Z" fill="#0a78c6"/><path d="M52 0L72 10V62L52 72Z" fill="#22a8f2"/><path d="M52 20V52L30 36Z" fill="#e3edf7"/><path d="M0 22L8 16 52 52V72L0 28Z" fill="#0d8bd8" opacity=".85"/>`,
  sw: `<path d="M32 0L64 14V50L32 66 0 50V14Z" fill="#b01518"/><path d="M32 0L64 14 32 28 0 14Z" fill="#e4252a"/><path d="M32 28V66L64 50V14Z" fill="#6c0c0e"/><text x="16" y="46" font-family="Roboto, sans-serif" font-weight="700" font-size="28" text-anchor="middle" fill="#fff">S</text><text x="47" y="44" font-family="Roboto, sans-serif" font-size="28" text-anchor="middle" fill="#f4e4e4">W</text><rect x="34" y="50" width="34" height="20" rx="4" fill="#777" opacity=".8"/><text x="51" y="67" font-family="Roboto, sans-serif" font-weight="700" font-size="19" text-anchor="middle" textLength="32" lengthAdjust="spacingAndGlyphs" fill="#fff">2023</text>`,
};

customElements.define('fc-taskicon', class extends HTMLElement {
  connectedCallback() {
    const name = this.getAttribute('name');
    if (this.hasAttribute('plain')) {
      open_(this, `<style>:host { display: block; flex: none; width: 72px; height: 72px; margin-top: 31px; } svg { display: block; width: 100%; }</style>
        <svg viewBox="0 0 72 72">${TASK[name]}</svg>`);
      return;
    }
    if (name === 'freecad') {
      open_(this, `<style>
        :host { display: flex; flex-direction: column; align-items: center; box-sizing: border-box; flex: none; width: 115px; height: 117px; margin: 9px 8px 0 9px; padding-top: 22px;
          background: #eff4fb; border-radius: 12px; border: 1px solid #dde5f0; border-bottom: 3px solid #cfd8e6; }
        .b { display: flex; align-items: center; justify-content: center; flex: none; box-sizing: border-box; width: 72px; height: 72px; border: 1px solid #dfe3e8; }
        .l { width: 15px; height: 22px; }
        .bar { width: 48px; height: 9px; margin-top: 11px; border-radius: 5px; background: #0f78d4; }
      </style><div class="b"><div class="l">${LOGO}</div></div><div class="bar"></div>`);
      return;
    }
    open_(this, `<style>
      :host { display: flex; flex-direction: column; align-items: center; flex: none; width: 132px; padding-top: 31px; }
      svg { display: block; overflow: visible; }
      .dot { width: 18px; height: 9px; margin-top: 11px; border-radius: 5px; background: ${this.hasAttribute('dot') ? '#7a8290' : 'transparent'}; }
    </style><svg viewBox="0 0 72 72" width="72" height="72">${TASK[name]}</svg><div class="dot"></div>`);
  }
});

customElements.define('fc-clock', class extends HTMLElement {
  connectedCallback() {
    open_(this, `<style>
      :host { display: flex; flex-direction: column; align-items: flex-end; gap: 9px; margin-left: auto; padding: 20px 69px 0 0; color: #444; font-size: 34px; line-height: 40px; }
    </style><div>${this.getAttribute('time')}</div><div>${this.getAttribute('date')}</div>`);
  }
});

customElements.define('fc-taskbar', class extends HTMLElement {
  connectedCallback() {
    open_(this, `<style>
      :host { display: flex; align-items: flex-start; flex: none; height: 137px; border-top: 4px solid #b3bccb; box-sizing: content-box;
        background: linear-gradient(90deg,#e4eefa 0,#e2edf9 20%,#d2dff6 30%,#d4def4 55%,#d6e1f4 75%,#e0ecf8 85%,#dfebf7 100%); }
    </style><slot></slot>`);
  }
});
</script>
</body>
</html>
